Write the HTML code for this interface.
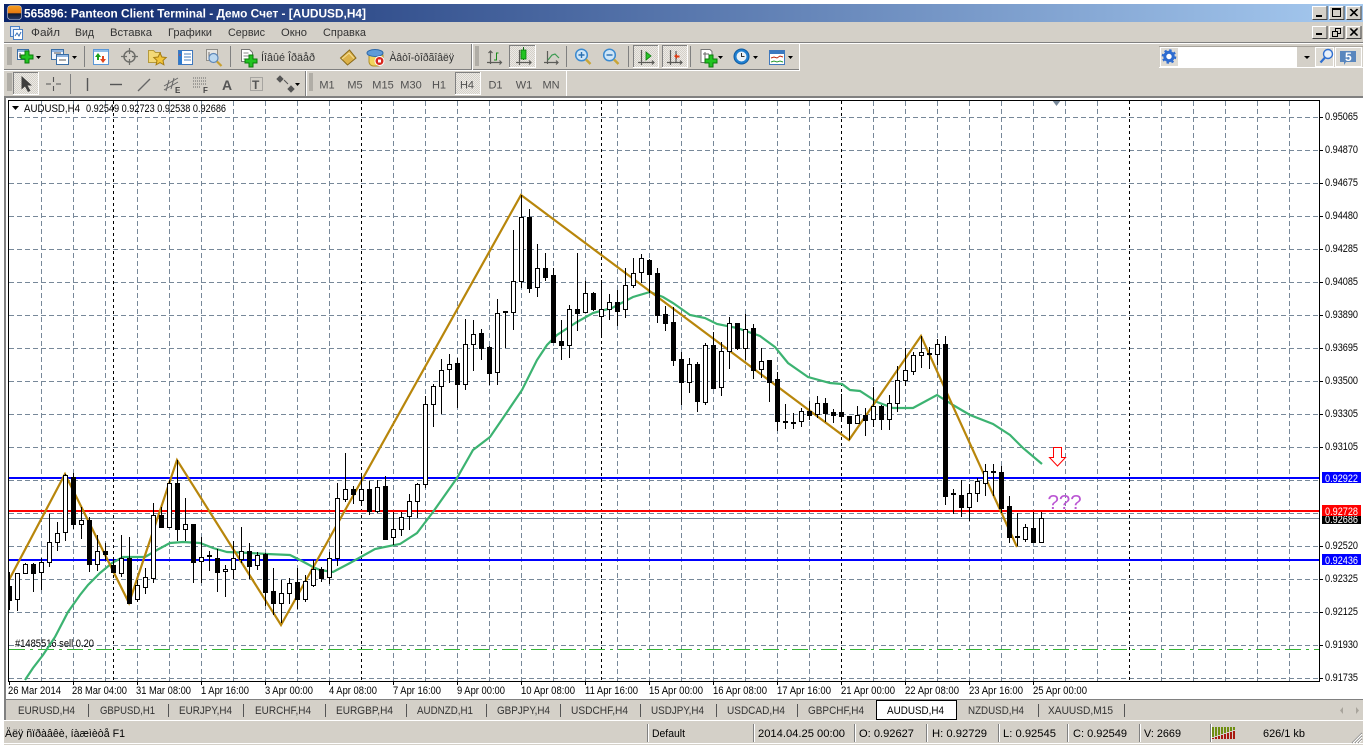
<!DOCTYPE html>
<html><head><meta charset="utf-8"><title>Panteon Client Terminal</title>
<style>
html,body{margin:0;padding:0;background:#fff;width:1368px;height:746px;overflow:hidden}
svg{display:block}
text{font-family:"Liberation Sans","Noto Sans CJK SC",sans-serif;font-size:11px;fill:#000}
.g{fill:#505050}
.t{fill:#333}
.c{shape-rendering:crispEdges}
</style></head><body>
<svg width="1368" height="746" viewBox="0 0 1368 746" xmlns="http://www.w3.org/2000/svg">
<defs>
<linearGradient id="tb" x1="0" x2="1" y1="0" y2="0"><stop offset="0" stop-color="#0A246A"/><stop offset="1" stop-color="#A6CAF0"/></linearGradient>
<linearGradient id="ic" x1="0" x2="0" y1="0" y2="1"><stop offset="0" stop-color="#F6A020"/><stop offset=".55" stop-color="#E87810"/><stop offset=".56" stop-color="#10182c"/><stop offset="1" stop-color="#2a3a66"/></linearGradient>
<pattern id="dth" width="2" height="2" patternUnits="userSpaceOnUse"><rect width="2" height="2" fill="#ECEAE6"/><rect width="1" height="1" fill="#D4D0C8"/><rect x="1" y="1" width="1" height="1" fill="#D4D0C8"/></pattern>
<clipPath id="cc"><rect x="9" y="101" width="1310" height="580"/></clipPath>
<g id="plus"><path d="M-2-6h4v4h4v4h-4v4h-4v-4h-4v-4h4z" fill="#22C422" stroke="#0B7A0B" stroke-width="1"/></g>
</defs>
<rect width="1368" height="746" fill="#fff"/>
<rect x="4" y="4" width="1359" height="741" fill="#D4D0C8"/>
<!-- title bar -->
<rect x="4" y="4" width="1359" height="18" fill="url(#tb)"/>
<rect x="7.5" y="5.5" width="14" height="14" rx="3" fill="url(#ic)" stroke="#c9cfe0" stroke-width=".6"/>
<text x="24" y="17.5" textLength="342" lengthAdjust="spacingAndGlyphs" style="font-weight:bold;font-size:12px;fill:#fff">565896: Panteon Client Terminal - Демо Счет - [AUDUSD,H4]</text>
<!-- window buttons -->
<g class="c">
<path d="M1312 6h15v14h-15z" fill="#D4D0C8" stroke="#fff" stroke-width="0"/><path d="M1312.5 19.5V6.5h14" fill="none" stroke="#fff"/><path d="M1312.5 19.5h14.5V6" fill="none" stroke="#404040"/><rect x="1316" y="15" width="6" height="2" fill="#000"/>
<path d="M1329 6h15v14h-15z" fill="#D4D0C8"/><path d="M1329.5 19.5V6.5h14" fill="none" stroke="#fff"/><path d="M1329.5 19.5h14.5V6" fill="none" stroke="#404040"/><rect x="1332.5" y="8.5" width="8" height="8" fill="none" stroke="#000"/><rect x="1332" y="8" width="9" height="2" fill="#000"/>
<path d="M1346 6h15v14h-15z" fill="#D4D0C8"/><path d="M1346.5 19.5V6.5h14" fill="none" stroke="#fff"/><path d="M1346.5 19.5h14.5V6" fill="none" stroke="#404040"/>
<path d="M1312 26h15v13h-15z" fill="#D4D0C8"/><path d="M1312.5 38.5V26.5h14" fill="none" stroke="#fff"/><path d="M1312.5 38.5h14.5V26" fill="none" stroke="#404040"/><rect x="1316" y="33" width="6" height="2" fill="#000"/>
<path d="M1329 26h15v13h-15z" fill="#D4D0C8"/><path d="M1329.5 38.5V26.5h14" fill="none" stroke="#fff"/><path d="M1329.5 38.5h14.5V26" fill="none" stroke="#404040"/><rect x="1335.5" y="28.5" width="5" height="5" fill="none" stroke="#000"/><rect x="1332.5" y="31.5" width="5" height="5" fill="#D4D0C8" stroke="#000"/>
<path d="M1346 26h15v13h-15z" fill="#D4D0C8"/><path d="M1346.5 38.5V26.5h14" fill="none" stroke="#fff"/><path d="M1346.5 38.5h14.5V26" fill="none" stroke="#404040"/>
</g>
<path d="M1350 9l7 7M1357 9l-7 7M1350.8 9l7 7M1357.8 9l-7 7M1350 28.5l7 7M1357 28.5l-7 7M1350.8 28.5l7 7M1357.8 28.5l-7 7" stroke="#000" fill="none"/>
<!-- menu -->
<rect x="10.5" y="26.5" width="9" height="10" fill="#dfe9f8" stroke="#4a7fc4"/><rect x="13.5" y="29.5" width="9" height="10" fill="#fff" stroke="#4a7fc4"/><path d="M15 36l2-3 2 3 2-4" stroke="#3a6fb5" fill="none"/>
<text x="31" y="36" textLength="29" lengthAdjust="spacingAndGlyphs" class="t">Файл</text>
<text x="75" y="36" textLength="19" lengthAdjust="spacingAndGlyphs" class="t">Вид</text>
<text x="110" y="36" textLength="42" lengthAdjust="spacingAndGlyphs" class="t">Вставка</text>
<text x="168" y="36" textLength="44" lengthAdjust="spacingAndGlyphs" class="t">Графики</text>
<text x="228" y="36" textLength="37" lengthAdjust="spacingAndGlyphs" class="t">Сервис</text>
<text x="281" y="36" textLength="26" lengthAdjust="spacingAndGlyphs" class="t">Окно</text>
<text x="323" y="36" textLength="43" lengthAdjust="spacingAndGlyphs" class="t">Справка</text>
<!-- toolbar separators -->
<g class="c">
<rect x="4" y="42" width="1359" height="1" fill="#808080"/><rect x="4" y="43" width="1359" height="1" fill="#fff"/>
<rect x="4" y="69" width="796" height="1" fill="#808080"/><rect x="4" y="70" width="796" height="1" fill="#fff"/>
<rect x="799" y="44" width="1" height="26" fill="#fff"/><rect x="471" y="44" width="1" height="26" fill="#808080"/><rect x="472" y="44" width="1" height="26" fill="#fff"/>
<rect x="305" y="71" width="1" height="25" fill="#808080"/><rect x="306" y="71" width="1" height="25" fill="#fff"/><rect x="566" y="71" width="1" height="25" fill="#fff"/>
<path d="M84.5 46v21M230.5 46v21M566.5 46v21M628.5 46v21M690.5 46v21M70.5 74v20" stroke="#808080" fill="none"/>
<path d="M7 48h5M7 50h5M7 52h5M7 54h5M7 56h5M7 58h5M7 60h5M7 62h5M7 64h5M7 74h5M7 76h5M7 78h5M7 80h5M7 82h5M7 84h5M7 86h5M7 88h5M7 90h5M309 74h4M309 76h4M309 78h4M309 80h4M309 82h4M309 84h4M309 86h4M309 88h4M309 90h4M475 47h4M475 49h4M475 51h4M475 53h4M475 55h4M475 57h4M475 59h4M475 61h4M475 63h4M475 65h4" stroke="#8c8a84" fill="none"/>
<!-- pressed -->
<g fill="url(#dth)"><rect x="509" y="45" width="26" height="22"/><rect x="633" y="45" width="25" height="22"/><rect x="662" y="45" width="25" height="22"/><rect x="13" y="72" width="25" height="22"/><rect x="455" y="72" width="25" height="22"/></g>
<path d="M509.5 67V45.5h25.5M633.5 67V45.5h24.5M662.5 67V45.5h24.5M13.5 94V72.5h24.5M455.5 94V72.5h24.5" stroke="#808080" fill="none"/>
<path d="M509 67.5h26.5V45M633 67.5h25.5V45M662 67.5h25.5V45M13 94.5h25.5V72M455 94.5h25.5V72" stroke="#fff" fill="none"/>
</g>
<!-- row 1 icons -->
<rect x="17.5" y="49.5" width="11" height="10" fill="#fff" stroke="#3a6ea5"/><rect x="18" y="50" width="10" height="2" fill="#8fb4e0"/><path d="M20 53v5M19 56h6" stroke="#555"/>
<use href="#plus" x="27" y="57"/>
<path d="M36 56h5l-2.500 3z" fill="#000"/>
<rect x="51.500" y="49.500" width="12" height="10" fill="#eef3fb" stroke="#3a6ea5"/><rect x="52" y="50" width="11" height="2" fill="#8fb4e0"/><rect x="56.500" y="54.500" width="12" height="10" fill="#fff" stroke="#3a6ea5"/><rect x="57" y="55" width="11" height="2" fill="#8fb4e0"/><path d="M54 53h7M59 60h7" stroke="#555"/>
<path d="M72 56h5l-2.500 3z" fill="#000"/>
<rect x="93.500" y="49.500" width="15" height="15" fill="#fdfdfd" stroke="#5a97d8"/><rect x="94" y="50" width="14" height="2" fill="#8fbde8"/>
<path d="M98 53l3 4h-2v3h-2v-3h-2z" fill="#18a018"/><path d="M103 63l-3-4h2v-3h2v3h2z" fill="#e0441c"/>
<circle cx="129.500" cy="56.500" r="5.500" fill="none" stroke="#6e6e6a" stroke-width="1.500"/><path d="M129.500 48v6M129.500 59v6M121 56.500h6M132 56.500h6" stroke="#6e6e6a" stroke-width="1.200"/>
<path d="M148.500 50.500h5l2 2h5v10h-12z" fill="#F3D977" stroke="#b59a3c"/><path d="M160 53l1.900 4 4.300.5-3.200 3 .9 4.300-3.900-2.200-3.900 2.200.9-4.300-3.200-3 4.300-.5z" fill="#F2C53A" stroke="#a57c12"/>
<rect x="178.500" y="50.500" width="14" height="14" fill="#fff" stroke="#3f78bd"/><rect x="179" y="51" width="3" height="13" fill="#2a7ad0"/><path d="M184 54h7M184 57h7M184 60h7" stroke="#4a80c0"/><path d="M180 54v2" stroke="#e04030"/>
<rect x="206.500" y="49.500" width="11" height="11" fill="#e8e6e2" stroke="#908e88"/><path d="M209 52v7h7" stroke="#777" fill="none"/><circle cx="213.500" cy="58" r="4.500" fill="#bcd8f0" stroke="#5f88b8" stroke-width="1.200"/><path d="M217 61.500l4.500 4.500" stroke="#c8a030" stroke-width="2.200"/>
<path d="M241.500 49.500h8l3 3v9h-11z" fill="#fff" stroke="#777"/><path d="M243.500 53h5M243.500 56h7M243.500 59h5" stroke="#888"/><use href="#plus" x="251" y="61"/>
<text x="261" y="61" textLength="54" lengthAdjust="spacingAndGlyphs" class="t">Íîâûé Îðäåð</text>
<path d="M340.500 58l9-8 6.500 8-8.500 7z" fill="#DDB24A" stroke="#8a6a18"/><path d="M342 59l7-6 5 5.500" stroke="#F3DE96" fill="none"/>
<path d="M369 55h14v7a5 5 0 0 1-5 4h-5a5 5 0 0 1-4-4z" fill="#F2D45C" stroke="#b0902c"/><ellipse cx="375" cy="53" rx="8" ry="3.500" fill="#5F9BD8" stroke="#2e68a8"/><circle cx="379.500" cy="61" r="4.500" fill="#D8261C" stroke="#fff"/><rect x="378" y="59.500" width="3" height="3" fill="#fff"/>
<text x="389.500" y="61" textLength="64.500" lengthAdjust="spacingAndGlyphs" class="t">Àâòî-òîðãîâëÿ</text>
<!-- chart type icons -->
<g fill="none" stroke="#5c5c58" stroke-width="1.200">
<path d="M490.500 51v13M487 62.500h14M499.500 60.500l2 2-2 2M488.500 53l2-2 2 2M519.500 50v15M516 62.500h15M529 60.500l2 2-2 2M547.500 51v13M544 62.500h14M556 60.500l2 2-2 2"/>
<path d="M641.500 50v15M638 62.500h16M652 60.500l2 2-2 2M670.500 50v15M667 62.500h15M680 60.500l2 2-2 2"/>
</g>
<path d="M494 60h2.500v-7h2" stroke="#1a8a1a" fill="none"/>
<path d="M523.500 47v13" stroke="#116611"/><rect x="521" y="50" width="5" height="9" fill="#22C422" stroke="#0B7A0B" stroke-width=".8"/>
<path d="M548 60l4-5 3-1 4 4" stroke="#3a9a50" fill="none" stroke-width="1.200"/>
<circle cx="581.500" cy="55" r="5.800" fill="#cfe6f8" stroke="#3b8ad0" stroke-width="1.500"/><path d="M578.500 55h6M581.500 52v6" stroke="#2a6fb0" stroke-width="1.400"/><path d="M586 59.500l4.500 4.500" stroke="#c9a536" stroke-width="2.400"/>
<circle cx="609.500" cy="55" r="5.800" fill="#cfe6f8" stroke="#3b8ad0" stroke-width="1.500"/><path d="M606.500 55h6" stroke="#2a6fb0" stroke-width="1.400"/><path d="M614 59.500l4.500 4.500" stroke="#c9a536" stroke-width="2.400"/>
<path d="M646 52v8l5-4z" fill="#28c428" stroke="#0b7a0b" stroke-width=".8"/>
<path d="M676 51v12" stroke="#444"/><path d="M674 56l3-2v1.500h2.500v2h-2.500v1.500z" fill="#E03A10"/>
<path d="M702 49.500h8l2 2v11h-11v-13z" fill="#fff" stroke="#777"/><path d="M705 52v7M703 54h6" stroke="#666"/><use href="#plus" x="711" y="61"/>
<path d="M718 56h5l-2.500 3z" fill="#000"/>
<circle cx="741.500" cy="56.500" r="7.500" fill="#1F7FD0" stroke="#0E5AA0"/><circle cx="741.500" cy="56.500" r="5" fill="#EAF2F8"/><path d="M741.500 53v3.500h3" stroke="#333" fill="none"/>
<path d="M753 56h5l-2.500 3z" fill="#000"/>
<rect x="769.500" y="50.500" width="15" height="14" fill="#fff" stroke="#3f78bd"/><rect x="770" y="51" width="14" height="3" fill="#3a78c0"/><path d="M771 58l3-1 3 1 3-2 3 1" stroke="#c02a10" fill="none"/><path d="M771 62l3-1 3 1 3-1 3 1" stroke="#2a9a30" fill="none"/>
<path d="M788 56h5l-2.500 3z" fill="#000"/>
<!-- row 2 icons -->
<path d="M21.500 76v13.500l3.500-3 3 5.500 2.500-1.300-3-5.200h4.500z" fill="#3e3e3e"/>
<path d="M53.500 77v5M53.500 86v5M46 84h5M56 84h5" stroke="#555" fill="none" stroke-width="1.100"/>
<path d="M87.500 78v13" stroke="#555" stroke-width="1.400"/>
<path d="M110 84.500h12" stroke="#555" stroke-width="1.400"/>
<path d="M138 91l12-12" stroke="#666" stroke-width="1.300"/>
<path d="M164 86l14-8M164 90l14-8M166 91l3-11M171 89l3-11" stroke="#666" fill="none"/>
<text x="175" y="93" style="font-size:8px;font-weight:bold;fill:#444">E</text>
<path d="M193 78h14M193 81h14M193 84h14M193 87h8" stroke="#666" stroke-dasharray="1 1" fill="none"/>
<text x="203" y="93" style="font-size:8px;font-weight:bold;fill:#444">F</text>
<text x="222" y="90" style="font-size:14px;font-weight:bold;fill:#555">A</text>
<rect x="250.500" y="77.500" width="12" height="13" fill="none" stroke="#777" stroke-dasharray="1 1"/>
<text x="252" y="89" style="font-size:12px;font-weight:bold;fill:#555">T</text>
<path d="M280 76l3 3-3 3-3-3zM291 86l3 3-3 3-3-3zM284 80l4 4" fill="#555" stroke="#555"/>
<path d="M295 83h5l-2.500 3z" fill="#000"/>
<g>
<text x="327" y="88.500" text-anchor="middle" class="g">M1</text><text x="355" y="88.500" text-anchor="middle" class="g">M5</text><text x="383" y="88.500" text-anchor="middle" class="g">M15</text><text x="411" y="88.500" text-anchor="middle" class="g">M30</text><text x="439" y="88.500" text-anchor="middle" class="g">H1</text><text x="467" y="88.500" text-anchor="middle" class="g">H4</text><text x="495.500" y="88.500" text-anchor="middle" class="g">D1</text><text x="524" y="88.500" text-anchor="middle" class="g">W1</text><text x="551" y="88.500" text-anchor="middle" class="g">MN</text>
</g>
<!-- search area -->
<rect x="1159" y="46" width="204" height="1" fill="#a8a49c" class="c"/>
<rect x="1179" y="47" width="118" height="20" fill="#fff"/>
<rect x="1159" y="67" width="204" height="1" fill="#fff" class="c"/>
<rect x="1160.500" y="47.500" width="18" height="19" fill="#DEDBD4" stroke="#fff"/>
<circle cx="1169" cy="56.500" r="4.200" fill="#fff" stroke="#2E6CD0" stroke-width="3"/><circle cx="1169" cy="56.500" r="6.300" fill="none" stroke="#2E6CD0" stroke-width="2" stroke-dasharray="2.400 2.550"/>
<path d="M1304 56h6l-3 3z" fill="#000"/>
<rect x="1315.500" y="47.500" width="18" height="19" fill="#DEDBD4" stroke="#fff"/>
<circle cx="1328" cy="54" r="4.500" fill="#e8f0fa" stroke="#2F6FD0" stroke-width="1.400"/><path d="M1325 57.500l-4.500 5" stroke="#2F6FD0" stroke-width="2.200"/>
<rect x="1335.500" y="47.500" width="26" height="19" fill="#DEDBD4" stroke="#fff"/>
<path d="M1340 51h16v11h-10l-2 3v-3h-4z" fill="#5A87BE"/>
<text x="1345" y="61" style="font-weight:bold;font-size:12px;fill:#fff">5</text>
<!-- chart frame -->
<g class="c">
<rect x="4" y="96" width="1359" height="2" fill="#808080"/><rect x="4" y="98" width="2" height="602" fill="#808080"/>
<rect x="6" y="98" width="1357" height="602" fill="#fff"/>
<rect x="6" y="699" width="1357" height="1" fill="#808080"/>
</g>
<!-- grid -->
<g class="c" fill="none">
<path stroke="#778899" stroke-dasharray="5 3" d="M41.500 101V681M73.500 101V681M105.500 101V681M137.500 101V681M169.500 101V681M201.500 101V681M233.500 101V681M265.500 101V681M297.500 101V681M329.500 101V681M393.500 101V681M425.500 101V681M457.500 101V681M489.500 101V681M521.500 101V681M553.500 101V681M585.500 101V681M617.500 101V681M649.500 101V681M681.500 101V681M713.500 101V681M745.500 101V681M777.500 101V681M809.500 101V681M873.500 101V681M905.500 101V681M937.500 101V681M969.500 101V681M1001.500 101V681M1033.500 101V681M1065.500 101V681M1097.500 101V681M1161.500 101V681M1193.500 101V681M1225.500 101V681M1257.500 101V681M1289.500 101V681"/>
<path stroke="#778899" stroke-dasharray="5 3" d="M9 117.500H1319M9 150.500H1319M9 183.500H1319M9 216.500H1319M9 249.500H1319M9 282.500H1319M9 315.500H1319M9 348.500H1319M9 381.500H1319M9 414.500H1319M9 447.500H1319M9 480.500H1319M9 513.500H1319M9 546.500H1319M9 579.500H1319M9 612.500H1319M9 645.500H1319M9 678.500H1319"/>
<path stroke="#000" stroke-dasharray="3 3" d="M113.500 101V681M361.500 101V681M601.500 101V681M841.500 101V681M1129.500 101V681"/>
<path stroke="#35B535" stroke-dasharray="16 5 3 5" d="M9 649.500H1319"/>
<path stroke="#778899" d="M9 518.500H1319"/>
<path stroke="#0000FF" stroke-width="2" d="M9 478H1319M9 560H1319"/>
<path stroke="#FF0000" stroke-width="2" d="M9 511H1319"/>
</g>
<text x="15" y="647" textLength="79" lengthAdjust="spacingAndGlyphs">#1485516 sell 0.20</text>
<g clip-path="url(#cc)">
<polyline fill="none" stroke="#3CB371" stroke-width="2.200" points="25,680 33,668 43,655 55,637 68,612 80,595 88,585 100,573 112,563 123,557 145,557 157,550 170,543 183,542 200,543 213,548 227,552 250,553 267,554 290,555 300,560 313,567 320,570 333,572 350,563 375,549 400,544 417,533 433,512 457,478 473,450 490,437 503,418 522,390 537,360 547,345 557,335 577,322 593,313 612,308 633,297 650,292 663,297 673,303 690,315 705,318 717,324 737,328 760,336 775,347 788,363 808,377 830,383 842,384 850,390 860,391 877,402 893,408 913,408 937,395 953,405 970,415 993,424 1010,435 1023,448 1042,464"/>
<polyline fill="none" stroke="#B8860B" stroke-width="2.200" points="9,580 65,474 129,603 177,460 281,625 521,195 849,440 921,336 1017,547"/>
<g class="c">
<path fill="none" stroke="#000" d="M9.500 572V610M17.500 573V611M25.500 563V574M33.500 563V592M41.500 558V590M49.500 514V567M57.500 522V551M65.500 474V541M73.500 473V529M81.500 507V539M89.500 517V572M97.500 535V571M105.500 543V560M113.500 558V572M121.500 535V577M129.500 537V604M137.500 580V602M145.500 568V594M153.500 503V583M161.500 507V527M169.500 480V527M177.500 460V541M185.500 498V541M193.500 524V583M201.500 537V583M209.500 551V571M217.500 549V592M225.500 565V597M233.500 541V579M241.500 527V563M249.500 543V579M257.500 552V570M265.500 553V606M273.500 568V615M281.500 580V623M289.500 578V604M297.500 568V609M305.500 575V602M313.500 560V587M321.500 567V582M329.500 552V584M337.500 483V566M345.500 453V502M353.500 486V504M361.500 473V505M369.500 481V515M377.500 480V513M385.500 476V539M393.500 512V545M401.500 512V536M409.500 494V530M417.500 483V518M425.500 396V488M433.500 384V427M441.500 359V414M449.500 354V383M457.500 358V408M465.500 319V390M473.500 320V371M481.500 329V360M489.500 346V385M497.500 299V385M505.500 311V348M513.500 230V330M521.500 195V288M529.500 209V293M537.500 244V297M545.500 253V281M553.500 268V342M561.500 320V360M569.500 305V358M577.500 253V331M585.500 281V313M593.500 292V311M601.500 280V337M609.500 294V320M617.500 290V326M625.500 268V318M633.500 258V288M641.500 254V283M649.500 259V293M657.500 268V323M665.500 306V331M673.500 307V366M681.500 352V405M689.500 358V393M697.500 362V412M705.500 343V405M713.500 332V388M721.500 342V396M729.500 317V369M737.500 323V350M745.500 314V360M753.500 324V379M761.500 348V378M769.500 360V402M777.500 372V431M785.500 404V429M793.500 413V429M801.500 408V427M809.500 401V420M817.500 396V418M825.500 398V422M833.500 409V423M841.500 394V422M849.500 416V440M857.500 406V423M865.500 408V436M873.500 387V427M881.500 405V430M889.500 395V430M897.500 366V412M905.500 348V386M913.500 352V375M921.500 336V368M929.500 347V369M937.500 339V365M945.500 336V505M953.500 489V514M961.500 480V517M969.500 484V521M977.500 478V502M985.500 464V496M993.500 464V496M1001.500 466V513M1009.500 496V543M1017.500 513V546M1025.500 524V542M1033.500 512V543M1041.500 512V543"/>
<path fill="#fff" stroke="#000" d="M15.500 573.500h4V599.500h-4zM23.500 564.500h4V573.500h-4zM39.500 562.500h4V572.500h-4zM47.500 542.500h4V562.500h-4zM55.500 533.500h4V542.500h-4zM63.500 475.500h4V532.500h-4zM79.500 520.500h4V524.500h-4zM95.500 551.500h4V564.500h-4zM119.500 558.500h4V573.500h-4zM135.500 585.500h4V599.500h-4zM143.500 577.500h4V587.500h-4zM151.500 515.500h4V578.500h-4zM167.500 483.500h4V527.500h-4zM183.500 524.500h4V529.500h-4zM199.500 557.500h4V561.500h-4zM223.500 569.500h4V571.500h-4zM231.500 558.500h4V569.500h-4zM239.500 551.500h4V559.500h-4zM255.500 555.500h4V565.500h-4zM279.500 593.500h4V603.500h-4zM287.500 583.500h4V593.500h-4zM303.500 581.500h4V599.500h-4zM311.500 569.500h4V585.500h-4zM327.500 558.500h4V577.500h-4zM335.500 498.500h4V558.500h-4zM343.500 489.500h4V499.500h-4zM359.500 489.500h4V500.500h-4zM375.500 487.500h4V511.500h-4zM391.500 529.500h4V537.500h-4zM399.500 517.500h4V529.500h-4zM407.500 501.500h4V516.500h-4zM415.500 484.500h4V501.500h-4zM423.500 404.500h4V484.500h-4zM431.500 386.500h4V404.500h-4zM439.500 370.500h4V386.500h-4zM447.500 364.500h4V369.500h-4zM463.500 344.500h4V384.500h-4zM471.500 334.500h4V344.500h-4zM495.500 313.500h4V372.500h-4zM511.500 281.500h4V312.500h-4zM519.500 217.500h4V281.500h-4zM535.500 268.500h4V287.500h-4zM567.500 309.500h4V345.500h-4zM583.500 293.500h4V312.500h-4zM599.500 309.500h4V316.500h-4zM607.500 302.500h4V309.500h-4zM623.500 285.500h4V309.500h-4zM631.500 273.500h4V285.500h-4zM639.500 258.500h4V272.500h-4zM687.500 364.500h4V382.500h-4zM703.500 345.500h4V402.500h-4zM719.500 351.500h4V387.500h-4zM727.500 323.500h4V351.500h-4zM743.500 329.500h4V348.500h-4zM759.500 361.500h4V369.500h-4zM799.500 411.500h4V421.500h-4zM815.500 403.500h4V414.500h-4zM855.500 415.500h4V423.500h-4zM871.500 406.500h4V419.500h-4zM887.500 403.500h4V419.500h-4zM895.500 380.500h4V403.500h-4zM903.500 370.500h4V380.500h-4zM911.500 355.500h4V371.500h-4zM919.500 352.500h4V355.500h-4zM935.500 344.500h4V354.500h-4zM967.500 493.500h4V507.500h-4zM975.500 481.500h4V493.500h-4zM983.500 471.500h4V483.500h-4zM1023.500 527.500h4V539.500h-4zM1039.500 518.500h4V542.500h-4z"/>
<path fill="#000" d="M7 586h5V601h-5zM31 564h5V574h-5zM71 477h5V525h-5zM87 520h5V565h-5zM103 551h5V555h-5zM111 565h5V573h-5zM127 558h5V604h-5zM159 515h5V528h-5zM175 483h5V530h-5zM191 524h5V563h-5zM207 555h5V557h-5zM215 558h5V573h-5zM247 551h5V567h-5zM263 554h5V593h-5zM271 591h5V604h-5zM295 582h5V600h-5zM319 569h5V579h-5zM351 489h5V495h-5zM367 489h5V512h-5zM383 486h5V540h-5zM455 363h5V385h-5zM479 333h5V349h-5zM487 347h5V374h-5zM503 311h5V313h-5zM527 217h5V289h-5zM543 268h5V278h-5zM551 275h5V343h-5zM559 341h5V346h-5zM575 309h5V314h-5zM591 293h5V310h-5zM615 302h5V312h-5zM647 260h5V275h-5zM655 273h5V316h-5zM663 314h5V324h-5zM671 322h5V361h-5zM679 359h5V383h-5zM695 364h5V402h-5zM711 345h5V389h-5zM735 323h5V349h-5zM751 328h5V371h-5zM767 360h5V383h-5zM775 379h5V422h-5zM783 421h5V423h-5zM791 422h5V424h-5zM807 411h5V416h-5zM823 403h5V414h-5zM831 412h5V416h-5zM839 412h5V417h-5zM847 416h5V424h-5zM863 415h5V421h-5zM879 406h5V420h-5zM927 353h5V355h-5zM943 344h5V497h-5zM951 493h5V495h-5zM959 495h5V508h-5zM991 471h5V473h-5zM999 472h5V509h-5zM1007 506h5V538h-5zM1015 536h5V538h-5zM1031 528h5V543h-5z"/>
</g>
</g>
<!-- arrow and text objects -->
<path d="M1053.500 447.500h8v10h4l-8 8.500-8-8.500h4z" fill="#fff" stroke="#FF0000"/>
<text x="1047.500" y="509" style="font-size:20.500px;fill:#BA55D3">???</text>
<path d="M1052 100h9l-4.500 6z" fill="#778899"/>
<!-- axes -->
<g class="c">
<rect x="8" y="100" width="1312" height="1" fill="#000"/><rect x="8" y="100" width="1" height="582" fill="#000"/><rect x="1319" y="100" width="1" height="582" fill="#000"/><rect x="8" y="681" width="1312" height="1" fill="#000"/>
<path fill="none" stroke="#000" d="M1320 117.500h3M1320 150.500h3M1320 183.500h3M1320 216.500h3M1320 249.500h3M1320 282.500h3M1320 315.500h3M1320 348.500h3M1320 381.500h3M1320 414.500h3M1320 447.500h3M1320 546.500h3M1320 579.500h3M1320 612.500h3M1320 645.500h3M1320 678.500h3M9.500 682v3M73.500 682v3M137.500 682v3M201.500 682v3M265.500 682v3M329.500 682v3M393.500 682v3M457.500 682v3M521.500 682v3M585.500 682v3M649.500 682v3M713.500 682v3M777.500 682v3M841.500 682v3M905.500 682v3M969.500 682v3M1033.500 682v3"/>
</g>
<!-- chart title -->
<path d="M12 106h7l-3.500 4z" fill="#000"/>
<text x="24" y="112" textLength="56" lengthAdjust="spacingAndGlyphs">AUDUSD,H4</text>
<text x="86" y="112" textLength="140" lengthAdjust="spacingAndGlyphs">0.92549 0.92723 0.92538 0.92686</text>
<!-- price labels -->
<g>
<text x="1325" y="120" textLength="33" lengthAdjust="spacingAndGlyphs">0.95065</text>
<text x="1325" y="153" textLength="33" lengthAdjust="spacingAndGlyphs">0.94870</text>
<text x="1325" y="186" textLength="33" lengthAdjust="spacingAndGlyphs">0.94675</text>
<text x="1325" y="219" textLength="33" lengthAdjust="spacingAndGlyphs">0.94480</text>
<text x="1325" y="252" textLength="33" lengthAdjust="spacingAndGlyphs">0.94285</text>
<text x="1325" y="285" textLength="33" lengthAdjust="spacingAndGlyphs">0.94085</text>
<text x="1325" y="318" textLength="33" lengthAdjust="spacingAndGlyphs">0.93890</text>
<text x="1325" y="351" textLength="33" lengthAdjust="spacingAndGlyphs">0.93695</text>
<text x="1325" y="384" textLength="33" lengthAdjust="spacingAndGlyphs">0.93500</text>
<text x="1325" y="417" textLength="33" lengthAdjust="spacingAndGlyphs">0.93305</text>
<text x="1325" y="450" textLength="33" lengthAdjust="spacingAndGlyphs">0.93105</text>
<text x="1325" y="549" textLength="33" lengthAdjust="spacingAndGlyphs">0.92520</text>
<text x="1325" y="582" textLength="33" lengthAdjust="spacingAndGlyphs">0.92325</text>
<text x="1325" y="615" textLength="33" lengthAdjust="spacingAndGlyphs">0.92125</text>
<text x="1325" y="648" textLength="33" lengthAdjust="spacingAndGlyphs">0.91930</text>
<text x="1325" y="681" textLength="33" lengthAdjust="spacingAndGlyphs">0.91735</text>
</g>
<g class="c"><rect x="1322" y="513" width="39" height="11" fill="#000"/></g>
<text x="1325" y="523" textLength="33" lengthAdjust="spacingAndGlyphs" style="fill:#fff">0.92686</text>
<g class="c"><rect x="1322" y="472" width="39" height="11" fill="#0000FF"/><rect x="1322" y="505" width="39" height="11" fill="#FF0000"/><rect x="1322" y="554" width="39" height="11" fill="#0000FF"/></g>
<text x="1325" y="482" textLength="33" lengthAdjust="spacingAndGlyphs" style="fill:#fff">0.92922</text>
<text x="1325" y="515" textLength="33" lengthAdjust="spacingAndGlyphs" style="fill:#fff">0.92728</text>
<text x="1325" y="564" textLength="33" lengthAdjust="spacingAndGlyphs" style="fill:#fff">0.92436</text>
<!-- time labels -->
<g>
<text x="8" y="694" textLength="53" lengthAdjust="spacingAndGlyphs">26 Mar 2014</text>
<text x="72" y="694" textLength="55" lengthAdjust="spacingAndGlyphs">28 Mar 04:00</text>
<text x="136" y="694" textLength="55" lengthAdjust="spacingAndGlyphs">31 Mar 08:00</text>
<text x="201" y="694" textLength="48" lengthAdjust="spacingAndGlyphs">1 Apr 16:00</text>
<text x="265" y="694" textLength="48" lengthAdjust="spacingAndGlyphs">3 Apr 00:00</text>
<text x="329" y="694" textLength="48" lengthAdjust="spacingAndGlyphs">4 Apr 08:00</text>
<text x="393" y="694" textLength="48" lengthAdjust="spacingAndGlyphs">7 Apr 16:00</text>
<text x="457" y="694" textLength="48" lengthAdjust="spacingAndGlyphs">9 Apr 00:00</text>
<text x="521" y="694" textLength="54" lengthAdjust="spacingAndGlyphs">10 Apr 08:00</text>
<text x="585" y="694" textLength="53" lengthAdjust="spacingAndGlyphs">11 Apr 16:00</text>
<text x="649" y="694" textLength="54" lengthAdjust="spacingAndGlyphs">15 Apr 00:00</text>
<text x="713" y="694" textLength="54" lengthAdjust="spacingAndGlyphs">16 Apr 08:00</text>
<text x="777" y="694" textLength="54" lengthAdjust="spacingAndGlyphs">17 Apr 16:00</text>
<text x="841" y="694" textLength="54" lengthAdjust="spacingAndGlyphs">21 Apr 00:00</text>
<text x="905" y="694" textLength="54" lengthAdjust="spacingAndGlyphs">22 Apr 08:00</text>
<text x="969" y="694" textLength="54" lengthAdjust="spacingAndGlyphs">23 Apr 16:00</text>
<text x="1033" y="694" textLength="54" lengthAdjust="spacingAndGlyphs">25 Apr 00:00</text>
</g>
<!-- tabs -->
<g class="c">
<rect x="4" y="700" width="2" height="20" fill="#808080"/>
<rect x="4" y="720" width="1359" height="1" fill="#fff"/>
<rect x="4" y="743" width="1359" height="1" fill="#fff"/>
<path d="M88.500 704v13M168.500 704v13M243.500 704v13M325.500 704v13M406.500 704v13M486.500 704v13M560.500 704v13M640.500 704v13M716.500 704v13M797.500 704v13M1038.500 704v13M1124.500 704v13" stroke="#555" fill="none"/>
<rect x="876.500" y="700.500" width="80" height="19" fill="#fff" stroke="#000"/>
<rect x="877" y="719" width="79" height="1" fill="#000"/>
</g>
<g>
<text x="18" y="714" textLength="57" lengthAdjust="spacingAndGlyphs" class="t">EURUSD,H4</text>
<text x="100" y="714" textLength="55" lengthAdjust="spacingAndGlyphs" class="t">GBPUSD,H1</text>
<text x="179" y="714" textLength="53" lengthAdjust="spacingAndGlyphs" class="t">EURJPY,H4</text>
<text x="255" y="714" textLength="56" lengthAdjust="spacingAndGlyphs" class="t">EURCHF,H4</text>
<text x="336" y="714" textLength="57" lengthAdjust="spacingAndGlyphs" class="t">EURGBP,H4</text>
<text x="417" y="714" textLength="56" lengthAdjust="spacingAndGlyphs" class="t">AUDNZD,H1</text>
<text x="497" y="714" textLength="53" lengthAdjust="spacingAndGlyphs" class="t">GBPJPY,H4</text>
<text x="571" y="714" textLength="57" lengthAdjust="spacingAndGlyphs" class="t">USDCHF,H4</text>
<text x="651" y="714" textLength="53" lengthAdjust="spacingAndGlyphs" class="t">USDJPY,H4</text>
<text x="727" y="714" textLength="58" lengthAdjust="spacingAndGlyphs" class="t">USDCAD,H4</text>
<text x="808" y="714" textLength="56" lengthAdjust="spacingAndGlyphs" class="t">GBPCHF,H4</text>
<text x="887" y="714" textLength="57" lengthAdjust="spacingAndGlyphs">AUDUSD,H4</text>
<text x="968" y="714" textLength="56" lengthAdjust="spacingAndGlyphs" class="t">NZDUSD,H4</text>
<text x="1048" y="714" textLength="65" lengthAdjust="spacingAndGlyphs" class="t">XAUUSD,M15</text>
</g>
<path d="M1343 707l-3 3.500 3 3.500zM1356 707l3 3.500-3 3.500z" fill="#a8a49c"/>
<!-- status -->
<g class="c"><path d="M647.500 724v18M753.500 724v18M854.500 724v18M926.500 724v18M998.500 724v18M1067.500 724v18M1139.500 724v18M1210.500 724v18" stroke="#808080" fill="none"/>
<path d="M648.500 724v18M754.500 724v18M855.500 724v18M927.500 724v18M999.500 724v18M1068.500 724v18M1140.500 724v18M1211.500 724v18" stroke="#fff" fill="none"/>
<path d="M1212 727h2v10h-2zM1215 727h2v9h-2zM1218 727h2v8h-2zM1221 727h2v7h-2zM1224 727h2v6h-2zM1227 727h2v5h-2zM1230 727h2v4h-2zM1233 727h2v3h-2z" fill="#6E8E10"/>
<path d="M1212 738h2v1h-2zM1215 737h2v2h-2zM1218 736h2v3h-2zM1221 735h2v4h-2zM1224 734h2v5h-2zM1227 733h2v6h-2zM1230 732h2v7h-2zM1233 731h2v8h-2z" fill="#A81A10"/></g>
<text x="5" y="737" textLength="120" lengthAdjust="spacingAndGlyphs">Äëÿ ñïðàâêè, íàæìèòå F1</text>
<text x="652" y="737" textLength="33" lengthAdjust="spacingAndGlyphs">Default</text>
<text x="758" y="737" textLength="87" lengthAdjust="spacingAndGlyphs">2014.04.25 00:00</text>
<text x="859" y="737" textLength="55" lengthAdjust="spacingAndGlyphs">O: 0.92627</text>
<text x="932" y="737" textLength="55" lengthAdjust="spacingAndGlyphs">H: 0.92729</text>
<text x="1003" y="737" textLength="53" lengthAdjust="spacingAndGlyphs">L: 0.92545</text>
<text x="1073" y="737" textLength="54" lengthAdjust="spacingAndGlyphs">C: 0.92549</text>
<text x="1144" y="737" textLength="37" lengthAdjust="spacingAndGlyphs">V: 2669</text>
<text x="1263" y="737" textLength="42" lengthAdjust="spacingAndGlyphs">626/1 kb</text>
<path d="M1352 743l10-10M1355 743l7-7M1358 743l4-4" stroke="#808080" fill="none"/>
<path d="M1353 743l9-9M1356 743l6-6M1359 743l3-3" stroke="#fff" fill="none"/>
</svg>
</body></html>
